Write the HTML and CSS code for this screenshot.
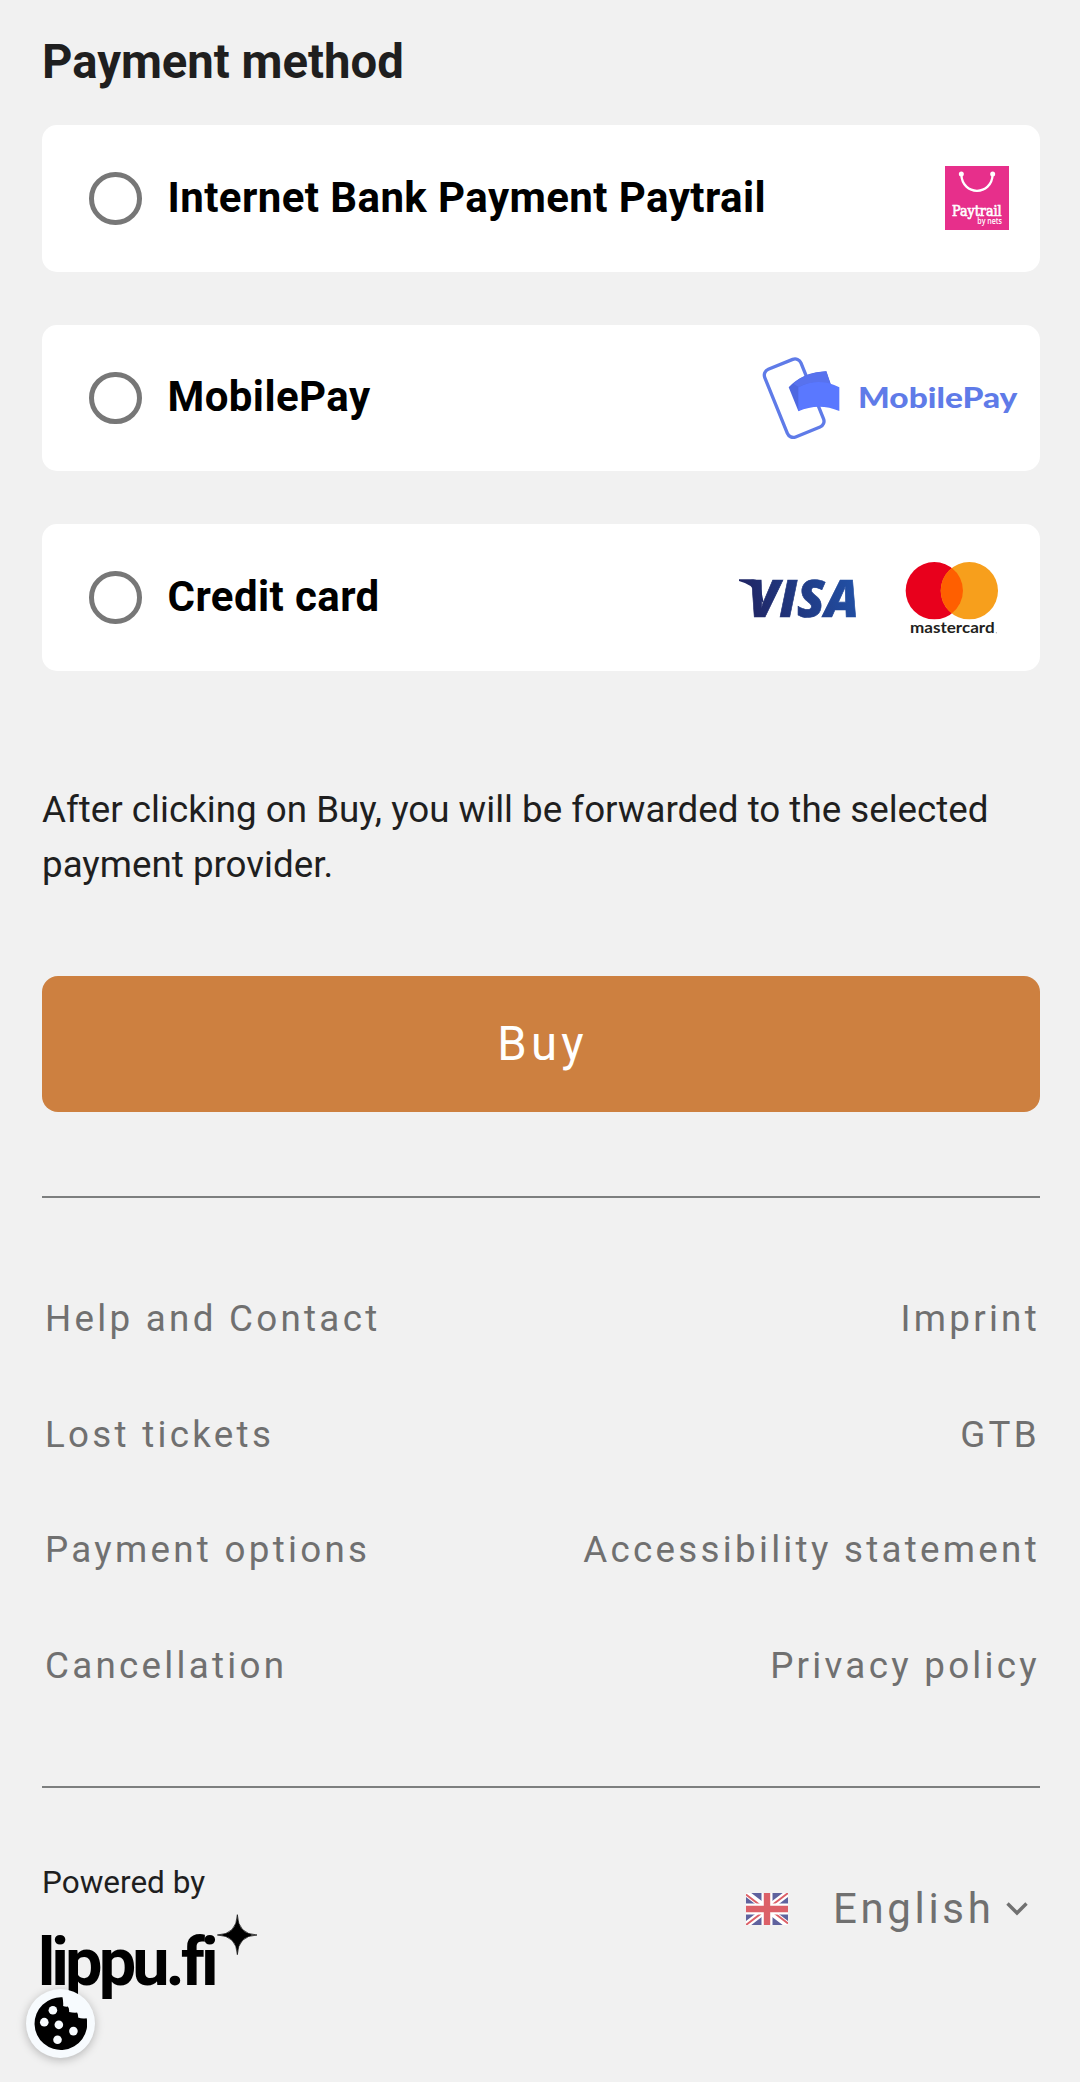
FILE: index.html
```html
<!DOCTYPE html>
<html lang="en">
<head>
    <meta charset="UTF-8">
    <meta name="viewport" content="width=device-width, initial-scale=1.0">
    <title>Payment method</title>
    <link rel="stylesheet" href="styles.css">
</head>
<body>
    <main class="container">
        <h2>Payment method</h2>
        <form>
            <div class="payment-list">
                <label class="payment-item">
                    <input type="radio" name="payment" value="paytrail">
                    <span>Internet Bank Payment Paytrail</span>
                    <svg class="logo-paytrail" viewBox="75 81 192 192">
                        <rect x="75" y="81" width="192" height="192" fill="#e72f8b"/>
                        <path d="M124 106C126 172 216 172 218 106" fill="none" stroke="#fff" stroke-width="7"/>
                        <circle cx="124" cy="105" r="7.5" fill="#fff"/>
                        <circle cx="218" cy="105" r="7.5" fill="#fff"/>
                        <text class="paytrail-name" x="96" y="230" textLength="149" lengthAdjust="spacingAndGlyphs">Paytrail</text>
                        <text class="paytrail-sub" x="172" y="256" textLength="74" lengthAdjust="spacingAndGlyphs">by nets</text>
                    </svg>
                </label>
                <label class="payment-item">
                    <input type="radio" name="payment" value="mobilepay">
                    <span>MobilePay</span>
                    <svg class="logo-mobilepay" viewBox="60 75 780 258">
                        <rect x="104" y="95" width="117" height="219" rx="19" transform="rotate(-22 162.5 204.5)" fill="none" stroke="#5f7be8" stroke-width="10"/>
                        <path d="M146 172Q190 126 259 124L282 190L175 243Z" fill="#4e68e0"/>
                        <path d="M160 161Q196 127 259 124L271 162Q220 148 176 171Z" fill="#5872ee"/>
                        <path d="M175 172Q236 140 298 172V243Q236 217 175 244Z" fill="#5a78ff"/>
                        <text class="mobilepay-name" x="354" y="234" textLength="478" lengthAdjust="spacingAndGlyphs">MobilePay</text>
                    </svg>
                </label>
                <label class="payment-item">
                    <input type="radio" name="payment" value="card">
                    <span>Credit card</span>
                    <svg class="logo-cards" viewBox="54 58 786 231">
                        <defs>
                            <linearGradient id="visa-blue" gradientUnits="userSpaceOnUse" x1="60" y1="220" x2="400" y2="120">
                                <stop offset="0" stop-color="#20225f"/>
                                <stop offset="1" stop-color="#2150a5"/>
                            </linearGradient>
                        </defs>
                        <path d="M57 119H100Q117 120 120 134L132 194L106 160Q96 133 57 124Z" fill="url(#visa-blue)"/>
                        <text class="visa-name" x="84" y="231" textLength="333" lengthAdjust="spacingAndGlyphs">VISA</text>
                        <circle cx="643" cy="153" r="86" fill="#e8001c"/>
                        <circle cx="748" cy="153" r="86" fill="#f79f1c"/>
                        <path d="M695.5 85A86 86 0 0 1 695.5 221A86 86 0 0 1 695.5 85Z" fill="#ff5f00"/>
                        <text class="mastercard-name" x="570" y="281" textLength="254" lengthAdjust="spacingAndGlyphs">mastercard</text>
                        <circle cx="829" cy="279" r="1.5" fill="#777"/>
                    </svg>
                </label>
            </div>
            <p class="info">After clicking on Buy, you will be forwarded to the selected payment provider.</p>
            <button type="submit">Buy</button>
        </form>
    </main>
    <footer>
        <nav>
            <div class="links">
                <a href="#">Help and Contact</a>
                <a href="#">Lost tickets</a>
                <a href="#">Payment options</a>
                <a href="#">Cancellation</a>
            </div>
            <div class="links links-right">
                <a href="#">Imprint</a>
                <a href="#">GTB</a>
                <a href="#">Accessibility statement</a>
                <a href="#">Privacy policy</a>
            </div>
        </nav>
        <div class="footer-bottom">
            <div class="powered">
                <p>Powered by</p>
                <svg class="logo-lippu" viewBox="126 220 660 270">
                    <text class="lippu-name" x="113" y="433">lippu.fi</text>
                    <path d="M712 222Q714 281 771 283Q714 285 712 342Q710 285 652 283Q710 281 712 222Z" stroke="#000" stroke-width="2"/>
                    <path d="M712 252Q717 278 742 283Q717 288 712 313Q707 288 682 283Q707 278 712 252Z"/>
                </svg>
            </div>
            <div class="language">
                <svg class="flag" viewBox="0 0 42 32">
                    <path d="M0 0H42V32H0Z" fill="#5f629e"/>
                    <path d="M0 0L42 32M42 0L0 32" stroke="#fff" stroke-width="6.4"/>
                    <path d="M0 1.5L19 16M42 0L21 16M0 32L21 16M42 30.5L23 16" stroke="#dc6068" stroke-width="1.9"/>
                    <path d="M21 0V32M0 16H42" stroke="#fff" stroke-width="11"/>
                    <path d="M21 0V32M0 16H42" stroke="#dc6068" stroke-width="6.4"/>
                </svg>
                <span>English</span>
                <svg class="chevron" viewBox="0 0 22 14">
                    <path d="M1.5 1.5L11 11L20.5 1.5" fill="none" stroke="#717171" stroke-width="3.4"/>
                </svg>
            </div>
        </div>
    </footer>
    <button class="cookie" type="button" aria-label="Cookies">
        <svg viewBox="102 468 160 160">
            <path d="M188 469A79.5 79.5 0 1 0 261 532Q247 535 235 530Q236 521 232 515Q220 516 208 513Q209 502 204 497Q196 498 190 495Q191 482 188 469Z"/>
            <g fill="#f7fbfe">
                <circle cx="159" cy="508" r="13"/>
                <circle cx="133" cy="544" r="13"/>
                <circle cx="177" cy="552" r="13"/>
                <circle cx="221" cy="571" r="13"/>
                <circle cx="173" cy="597" r="13"/>
            </g>
        </svg>
    </button>
</body>
</html>
```
FILE: styles.css
```css
body {
    font-family: Roboto, sans-serif;
    margin: 0;
    padding: 26px 40px 0 42px;
    background-color: #f1f1f1;
    color: #1f1f1f;
}
h2 {
    margin: 0 0 27px;
    font-size: 47.25px;
    line-height: 72px;
    font-weight: 700;
}
.payment-list {
    display: flex;
    flex-direction: column;
    gap: 53px;
}
.payment-item {
    display: flex;
    align-items: center;
    box-sizing: border-box;
    height: 146.5px;
    padding-left: 47px;
    background-color: white;
    border-radius: 15px;
    color: #000;
    font-size: 42px;
    line-height: 50px;
    font-weight: 700;
    letter-spacing: 0.42px;
}
.payment-item span {
    flex: 1;
    padding-bottom: 1px;
}
.payment-item text {
    letter-spacing: 0;
}
input[type="radio"] {
    appearance: none;
    box-sizing: border-box;
    width: 52.5px;
    height: 52.5px;
    margin: 0 26px 0 0;
    border: 5.25px solid #777;
    border-radius: 50%;
}
.logo-paytrail {
    width: 64px;
    height: 64px;
    margin-right: 31px;
}
.paytrail-name {
    font: 400 42px "DejaVu Serif", serif;
    fill: #fff;
    stroke: #fff;
    stroke-width: 2px;
}
.paytrail-sub {
    font: 600 24px "Open Sans", sans-serif;
    fill: #fff;
}
.logo-mobilepay {
    width: 260px;
    height: 86px;
    margin-right: 20px;
}
.mobilepay-name {
    font: 900 88px Lato, sans-serif;
    fill: #5f7be8;
}
.logo-cards {
    width: 262px;
    height: 77px;
    margin-right: 40px;
}
.visa-name {
    font: italic 800 155px "Open Sans", sans-serif;
    fill: url(#visa-blue);
    stroke: url(#visa-blue);
    stroke-width: 2px;
}
.mastercard-name {
    font: 700 45px Lato, sans-serif;
    fill: #231f20;
}
.info {
    margin: 111.5px 0 84px;
    font-size: 36.75px;
    line-height: 55.1px;
}
button[type="submit"] {
    display: block;
    width: 100%;
    height: 136px;
    padding: 0 0 0 3px;
    border: none;
    border-radius: 16px;
    background-color: #cd8040;
    color: white;
    font-family: inherit;
    font-size: 47.25px;
    letter-spacing: 4.2px;
    cursor: pointer;
}
footer {
    margin-top: 84px;
}
nav {
    display: flex;
    justify-content: space-between;
    height: 592px;
    padding: 63px 0 0 3px;
    border-top: 2px solid #7d7f7f;
    border-bottom: 2px solid #7d7f7f;
    box-sizing: border-box;
}
.links {
    display: flex;
    flex-direction: column;
}
.links-right {
    align-items: flex-end;
}
.links a {
    color: #707070;
    font-size: 36.75px;
    line-height: 115.6px;
    letter-spacing: 3.28px;
    text-decoration: none;
}
.footer-bottom {
    display: flex;
    justify-content: space-between;
    padding-top: 70.5px;
}
.powered p {
    margin: 0 0 7.5px;
    font-size: 31.5px;
    line-height: 48px;
}
.logo-lippu {
    display: block;
    width: 220px;
    height: 90px;
    overflow: visible;
}
.lippu-name {
    font: 700 200px Roboto, sans-serif;
    letter-spacing: -11.8px;
}
.language {
    display: flex;
    align-items: center;
    height: 50px;
    margin-top: 25px;
    padding-right: 12px;
    color: #707070;
    font-size: 42px;
    letter-spacing: 3.67px;
}
.flag {
    width: 42px;
    height: 32px;
    margin-right: 45px;
}
.chevron {
    width: 22px;
    height: 14px;
    margin-left: 11.5px;
}
/* floats above the footer logo */
.cookie {
    position: fixed;
    left: 26px;
    bottom: 24px;
    display: flex;
    align-items: center;
    justify-content: center;
    width: 69px;
    height: 69px;
    padding: 0;
    border: none;
    border-radius: 50%;
    background-color: #f7fbfe;
    box-shadow: 0 2px 10px rgba(0,0,0,0.25);
}
.cookie svg {
    width: 53px;
    height: 53px;
}
```
